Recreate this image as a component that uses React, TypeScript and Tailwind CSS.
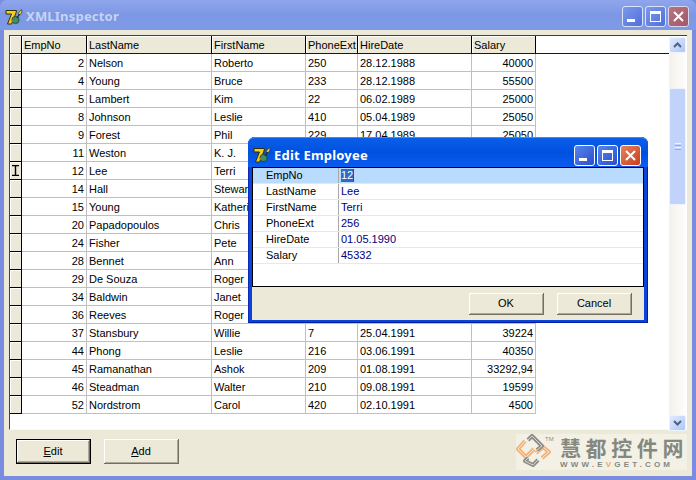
const rows: [string, string, string, string, string, string][] = [
  ["2", "Nelson", "Roberto", "250", "28.12.1988", "40000"],
  ["4", "Young", "Bruce", "233", "28.12.1988", "55500"],
  ["5", "Lambert", "Kim", "22", "06.02.1989", "25000"],
  ["8", "Johnson", "Leslie", "410", "05.04.1989", "25050"],
  ["9", "Forest", "Phil", "229", "17.04.1989", "25050"],
  ["11", "Weston", "K. J.", "34", "17.01.1990", "33292,94"],
  ["12", "Lee", "Terri", "256", "01.05.1990", "45332"],
  ["14", "Hall", "Stewart", "227", "04.06.1990", "29900"],
  ["15", "Young", "Katherine", "231", "14.06.1990", "24400"],
  ["20", "Papadopoulos", "Chris", "887", "01.01.1990", "25050"],
  ["24", "Fisher", "Pete", "888", "12.09.1990", "24000"],
  ["28", "Bennet", "Ann", "5", "01.02.1991", "22935"],
  ["29", "De Souza", "Roger", "288", "18.02.1991", "28000"],
  ["34", "Baldwin", "Janet", "2", "21.03.1991", "25500"],
  ["36", "Reeves", "Roger", "6", "25.04.1991", "33620,63"],
  ["37", "Stansbury", "Willie", "7", "25.04.1991", "39224"],
  ["44", "Phong", "Leslie", "216", "03.06.1991", "40350"],
  ["45", "Ramanathan", "Ashok", "209", "01.08.1991", "33292,94"],
  ["46", "Steadman", "Walter", "210", "09.08.1991", "19599"],
  ["52", "Nordstrom", "Carol", "420", "02.10.1991", "4500"],
];

const fields = [
  ["EmpNo", "12"],
  ["LastName", "Lee"],
  ["FirstName", "Terri"],
  ["PhoneExt", "256"],
  ["HireDate", "01.05.1990"],
  ["Salary", "45332"],
];

function Logo() {
  return (
    <svg viewBox="0 0 18 16" className="w-[18px] h-[16px] mr-[3px] shrink-0">
      <path d="M1 1.5 H11.5 L11 4 L6.5 15 H2.5 L6.5 5 H1 Z" fill="#f4cf1c" stroke="#33300c" strokeWidth="1" />
      <path d="M13 4.5 L16.5 0.5 L17 3 L15 6 Z" fill="#e8e04a" stroke="#33300c" strokeWidth="0.7" />
      <circle cx="10.5" cy="11" r="3.6" fill="#3d8f6a" stroke="#1d4030" strokeWidth="0.8" />
      <path d="M14.5 5 L12 9" stroke="#26301c" strokeWidth="1.4" />
      <path d="M6 14.5 L8 11" stroke="#b08a10" strokeWidth="1" />
    </svg>
  );
}

function CaptionButtons({ active }: { active: boolean }) {
  const blue = active
    ? "bg-gradient-to-br from-[#5a83ee] to-[#2a50c8] border-white"
    : "bg-gradient-to-br from-[#7d99ea] to-[#4f6fdb] border-[#dbe4fa]";
  const red = active
    ? "bg-gradient-to-br from-[#e8805a] to-[#c83c1a] border-white"
    : "bg-gradient-to-br from-[#b8767e] to-[#a0566c] border-[#dbd6ea]";
  return (
    <div className="flex gap-[2px]">
      <div className={`w-[21px] h-[21px] rounded-[3px] border flex items-end pl-[4px] pb-[4px] ${blue}`}>
        <div className="w-[8px] h-[3px] bg-white" />
      </div>
      <div className={`w-[21px] h-[21px] rounded-[3px] border flex items-center justify-center ${blue}`}>
        <div className="w-[11px] h-[11px] border border-white border-t-[3px]" />
      </div>
      <div className={`w-[21px] h-[21px] rounded-[3px] border flex items-center justify-center ${red}`}>
        <svg viewBox="0 0 11 11" className="w-[11px] h-[11px]">
          <path d="M1 1 L10 10 M10 1 L1 10" stroke="white" strokeWidth="2" />
        </svg>
      </div>
    </div>
  );
}

function XPButton({ label, u, rest, strong, w }: { label?: string; u?: string; rest?: string; strong?: boolean; w: string }) {
  return (
    <div className={`${w} ${strong ? "border border-black" : ""} shrink-0`}>
      <div className="h-full border-r border-b border-[#716f64] bg-[#ece9d8] shadow-[inset_1px_1px_0_#ffffff,inset_-1px_-1px_0_#aca899] flex items-center justify-center text-black">
        {label}
        {u && <span className="underline">{u}</span>}
        {rest}
      </div>
    </div>
  );
}

function Chevron({ up }: { up: boolean }) {
  return (
    <svg viewBox="0 0 9 6" className="w-[9px] h-[6px]">
      <path d={up ? "M1 5 L4.5 1.5 L8 5" : "M1 1 L4.5 4.5 L8 1"} fill="none" stroke="#4d6185" strokeWidth="2" />
    </svg>
  );
}

const cols = ["w-[65px]", "w-[125px]", "w-[94px]", "w-[52px]", "w-[114px]", "w-[64px]"];

export default function App() {
  return (
    <div
      className="relative w-[696px] h-[480px] overflow-hidden text-[11px] leading-[13px] bg-[#7a8ce0]"
      style={{ fontFamily: '"Liberation Sans", sans-serif' }}
    >
      {/* main window */}
      <div className="flex flex-col h-full">
        <div className="h-[30px] shrink-0 rounded-t-[7px] bg-gradient-to-b from-[#8fa6ec] via-[#7c97e4] to-[#7f9ae6] flex items-center pl-[5px] pr-[7px] pt-[3px]">
          <Logo />
          <div className="flex-1 font-bold text-[13px] text-[#c6d3f4] tracking-[0.2px]" style={{ fontFamily: '"Noto Sans", sans-serif' }}>
            XMLInspector
          </div>
          <CaptionButtons active={false} />
        </div>
        <div className="flex-1 mx-[4px] mb-[4px] bg-[#ece9d8] flex flex-col min-h-0">
          <div className="px-[5px] pt-[5px] h-[400px] shrink-0">
            <div className="h-[395px] flex border-l border-t border-[#404040] border-b-[#fbfaf5] border-b bg-white">
              <div className="flex-1 min-w-0">
                {/* header */}
                <div className="flex h-[18px] border-b border-[#1a1a1a]">
                  <div className="w-[12px] border-r border-black bg-[#ece9d8] shadow-[inset_1px_1px_0_#ffffff]" />
                  {["EmpNo", "LastName", "FirstName", "PhoneExt", "HireDate", "Salary"].map((h, i) => (
                    <div key={h} className={`${cols[i]} border-r border-black bg-[#ece9d8] shadow-[inset_1px_1px_0_#ffffff] pl-[2px] pt-[3px] overflow-hidden whitespace-nowrap`}>
                      {h}
                    </div>
                  ))}
                </div>
                {rows.map((r, ri) => (
                  <div key={ri} className="flex h-[18px]">
                    <div className="w-[12px] border-r border-b border-black bg-[#ece9d8] shadow-[inset_1px_1px_0_#ffffff] flex items-center justify-center">
                      {ri === 6 && (
                        <svg viewBox="0 0 7 11" className="w-[7px] h-[11px]">
                          <path d="M0 0.5 H7 M0 10.5 H7 M3.5 0.5 V10.5" stroke="black" strokeWidth="1.4" />
                        </svg>
                      )}
                    </div>
                    {r.map((c, i) => (
                      <div
                        key={i}
                        className={`${cols[i]} border-r border-b border-[#c0c0c0] pt-[3px] px-[2px] overflow-hidden whitespace-nowrap ${i === 0 || i === 5 ? "text-right" : ""} text-black`}
                      >
                        {c}
                      </div>
                    ))}
                  </div>
                ))}
              </div>
              {/* scrollbar */}
              <div className="w-[17px] mr-[1px] flex flex-col bg-gradient-to-r from-[#f3f1ec] to-[#fdfdfa] h-[394px] mt-[1px]">
                <div className="h-[16px] rounded-[2px] border border-[#eef3fd] bg-gradient-to-br from-[#e1eafe] to-[#aec8f7] flex items-center justify-center">
                  <Chevron up />
                </div>
                <div className="h-[35px]" />
                <div className="h-[117px] rounded-[2px] border border-[#eef3fd] bg-[#c1d3fb] flex flex-col items-center justify-center gap-[1px]">
                  <div className="w-[6px] h-[1px] bg-[#eef4fe]" />
                  <div className="w-[6px] h-[1px] bg-[#8faee8]" />
                  <div className="w-[6px] h-[1px] bg-[#eef4fe]" />
                  <div className="w-[6px] h-[1px] bg-[#8faee8]" />
                </div>
                <div className="flex-1" />
                <div className="h-[16px] rounded-[2px] border border-[#eef3fd] bg-gradient-to-br from-[#e1eafe] to-[#aec8f7] flex items-center justify-center">
                  <Chevron up={false} />
                </div>
              </div>
            </div>
          </div>
          <div className="flex gap-[13px] pl-[12px] pt-[9px]">
            <XPButton u="E" rest="dit" strong w="w-[75px] h-[25px]" />
            <XPButton u="A" rest="dd" w="w-[75px] h-[25px]" />
          </div>
        </div>
      </div>

      {/* dialog */}
      <div className="absolute left-[248px] top-[137px] w-[400px] h-[186px] rounded-t-[7px] bg-[#0a45d8] flex flex-col shadow-[inset_1px_0_0_#0a2bb5,inset_-1px_0_0_#001ea0,inset_0_-1px_0_#001ea0]">
        <div className="h-[30px] shrink-0 rounded-t-[7px] bg-gradient-to-b from-[#0a5fe8] via-[#0050e0] to-[#0a5cf0] flex items-center pl-[5px] pr-[7px] pt-[5px] border-t border-[#3a8cff]">
          <Logo />
          <div className="flex-1 font-bold text-[13px] text-white tracking-[0.2px]" style={{ fontFamily: '"Noto Sans", sans-serif' }}>
            Edit Employee
          </div>
          <CaptionButtons active />
        </div>
        <div className="mx-[4px] h-[153px] bg-[#ece9d8] flex flex-col">
          <div className="h-[120px] shrink-0 border border-black bg-white">
            {fields.map(([k, v], i) => (
              <div key={k} className={`flex h-[16px] border-b border-[#ece9d8] ${i === 0 ? "bg-[#b9dbfd]" : ""}`}>
                <div className="w-[86px] pl-[13px] pt-[1px] border-r border-[#a8a8a8] text-black">{k}</div>
                <div className="flex-1 pl-[2px] pt-[1px] text-[#000080]">
                  {i === 0 ? <span className="bg-[#316ac5] text-white inline-block w-[13px] border-r border-[#7a3a20]">{v}</span> : v}
                </div>
              </div>
            ))}
          </div>
          <div className="flex justify-end gap-[13px] pr-[12px] pt-[6px]">
            <XPButton label="OK" w="w-[75px] h-[22px]" />
            <XPButton label="Cancel" w="w-[75px] h-[22px]" />
          </div>
        </div>
      </div>

      {/* watermark */}
      <div className="absolute left-[516px] top-[434px] w-[171px] h-[36px] bg-[#f3f1e6] flex items-start" style={{ fontFamily: '"Noto Sans CJK SC", sans-serif' }}>
        <svg viewBox="0 0 42 36" className="w-[42px] h-[36px] shrink-0">
          <g fill="none" strokeLinejoin="round">
            <path d="M9 7 L2 15 L10 23 L18 15" stroke="#efb27a" strokeWidth="4" />
            <path d="M9 7 L2 15 L10 23 L18 15" stroke="#f8e6d2" strokeWidth="1" />
            <path d="M20 19 L27 13 L33 18 L26 24" stroke="#efb27a" strokeWidth="4" />
            <path d="M20 19 L27 13 L33 18 L26 24" stroke="#f8e6d2" strokeWidth="1" />
            <path d="M12 6 L16 2 L26 12 L21 16" stroke="#8d8d88" strokeWidth="4" />
            <path d="M12 6 L16 2 L26 12 L21 16" stroke="#d6d6d0" strokeWidth="1" />
            <path d="M12 24 L9 27 L17 31 L22 26" stroke="#8d8d88" strokeWidth="4" />
            <path d="M12 24 L9 27 L17 31 L22 26" stroke="#d6d6d0" strokeWidth="1" />
          </g>
          <text x="29" y="7" fontSize="6" fill="#8d8d88" fontFamily="Liberation Sans">TM</text>
        </svg>
        <div className="ml-[2px]">
          <div className="text-[21px] leading-[26px] font-bold text-[#85887f] tracking-[4.6px] whitespace-nowrap">慧都控件网</div>
          <div className="text-[8px] leading-[10px] font-bold text-[#85887f] tracking-[3.2px] whitespace-nowrap" style={{ fontFamily: '"Liberation Sans", sans-serif' }}>
            WWW.E<span className="text-[#eda662]">V</span>GET.COM
          </div>
        </div>
      </div>
    </div>
  );
}
